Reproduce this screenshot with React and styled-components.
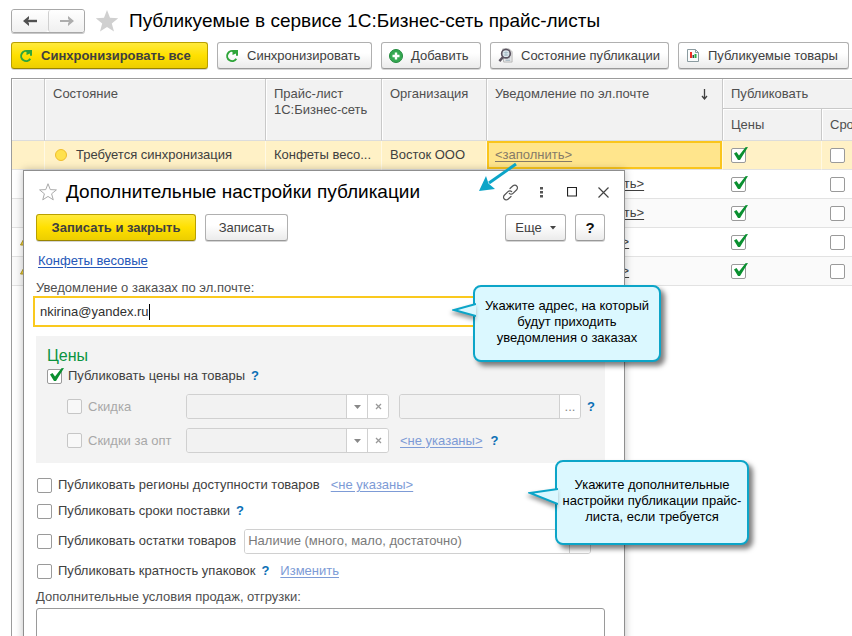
import React, { useState } from "react";
import styled, { createGlobalStyle, css } from "styled-components";

const GlobalStyle = createGlobalStyle`
  * {
    box-sizing: border-box;
  }
  body {
    margin: 0;
    background: #fff;
    color: #404040;
    font-family: "Liberation Sans", Arial, sans-serif;
    font-size: 13px;
    line-height: 16px;
  }
  button, input, select, textarea {
    font: inherit;
    color: inherit;
  }
`;

const priceLists = [
  { id: 1, state: "Требуется синхронизация", list: "Конфеты весо...", org: "Восток ООО", active: true, indent: 8 },
  { id: 2, indent: 80 },
  { id: 3, indent: 80 },
  { id: 4, warning: true, indent: 65 },
  { id: 5, warning: true, indent: 65 },
];

const STAR = "M12 1l3 7.800 8.200.4-6.400 5.200 2.200 8L12 17.900 5 22.400l2.200-8L.8 9.200 9 8.800z";

const RefreshIcon = () => (
  <svg width="14" height="14" viewBox="0 0 14 14" fill="none" stroke="#2fa53a" strokeWidth="2">
    <path d="M11.300 9.800A5 5 0 1 1 9.500 2.600" />
    <path d="M7.500 1H13v5.800h-2V4.500L7.500 6z" fill="#2fa53a" stroke="none" />
  </svg>
);

const AddIcon = () => (
  <svg width="14" height="14" viewBox="0 0 14 14">
    <circle cx="7" cy="7" r="6.500" fill="#35a852" stroke="#238a3e" />
    <path d="M7 3.500v7M3.500 7h7" stroke="#fff" strokeWidth="2.400" />
  </svg>
);

const SearchIcon = () => (
  <svg width="15" height="15" viewBox="0 0 16 16" fill="none">
    <path d="M5 1h7l3 3v11H6z" fill="#e9e9e9" stroke="#b3b3b3" />
    <path d="M8 10.500h5M8 13h5" stroke="#8fa8b8" />
    <circle cx="8.500" cy="6" r="4.600" fill="#dfe9ee" stroke="#5b5460" strokeWidth="1.800" />
    <path d="M6 5h5M6 7.500h5M8.500 3.500v5" stroke="#a5bcc8" />
    <path d="M5.500 9.500L1.500 14" stroke="#5b5460" strokeWidth="2.600" />
  </svg>
);

const ReportIcon = () => (
  <svg width="14" height="15" viewBox="0 0 14 15">
    <path d="M1.500 1.500h8l3 3v9h-11z" fill="#fafcfc" stroke="#8b9ba0" />
    <path d="M9.500 1.500v3h3" fill="none" stroke="#8b9ba0" />
    <path d="M4 4h2v6H4z" fill="#f02b22" />
    <path d="M6.500 7h1.500v3H6.500z" fill="#3c4a48" />
    <path d="M8.500 6h2v4H8.500z" fill="#27ad45" />
  </svg>
);

const CheckMark = () => (
  <Tick width="18" height="17" viewBox="0 0 18 17">
    <path d="M3 7.500l2.500-1.500 2.500 3.500L14.500 1.200l2.500-.2L9 14H7z" fill="#0a9030" />
  </Tick>
);

function Check({ checked, disabled, label, id }) {
  const [on, setOn] = useState(!!checked);
  return (
    <CheckWrap>
      <CheckInput
        id={id}
        type="checkbox"
        checked={on}
        disabled={disabled}
        aria-label={label}
        onChange={() => setOn(!on)}
      />
      {on && <CheckMark />}
    </CheckWrap>
  );
}

function Option({ id, text, checked, disabled, children, ...rest }) {
  return (
    <OptionRow {...rest}>
      <Check id={id} checked={checked} disabled={disabled} />
      <OptionLabel htmlFor={id} $disabled={disabled}>
        {text}
      </OptionLabel>
      {children}
    </OptionRow>
  );
}

function Combo({ label }) {
  return (
    <Field $width={203}>
      <FieldInput disabled aria-label={label} />
      <FieldButton disabled aria-label="Выбрать">
        <svg width="7" height="4" viewBox="0 0 7 4"><path d="M0 0h7L3.500 4z" fill="#888" /></svg>
      </FieldButton>
      <FieldButton disabled aria-label="Очистить">
        <svg width="7" height="7" viewBox="0 0 7 7"><path d="M1 1l5 5M6 1L1 6" stroke="#999" strokeWidth="1.300" /></svg>
      </FieldButton>
    </Field>
  );
}

function PriceTable() {
  return (
    <TableArea>
      <Table>
        <colgroup>
          <col style={{ width: 33 }} />
          <col style={{ width: 221 }} />
          <col style={{ width: 116 }} />
          <col style={{ width: 105 }} />
          <col style={{ width: 236 }} />
          <col style={{ width: 99 }} />
          <col style={{ width: 99 }} />
        </colgroup>
        <thead>
          <tr>
            <Th rowSpan="2" />
            <Th rowSpan="2">Состояние</Th>
            <Th rowSpan="2">Прайс-лист 1С:Бизнес-сеть</Th>
            <Th rowSpan="2">Организация</Th>
            <Th rowSpan="2">
              <Sorted>
                Уведомление по эл.почте
                <svg width="7" height="11" viewBox="0 0 7 11" fill="none" stroke="#404040">
                  <path d="M3.500 0v10M1 7l2.500 3L6 7" strokeWidth="1.300" />
                </svg>
              </Sorted>
            </Th>
            <Th colSpan="2" $group>Публиковать</Th>
          </tr>
          <tr>
            <Th $sub>Цены</Th>
            <Th $sub>Сро</Th>
          </tr>
        </thead>
        <tbody>
          {priceLists.map((row) => (
            <Row key={row.id} $active={row.active}>
              <Td>
                {row.warning && (
                  <svg width="12" height="12" viewBox="0 0 12 12"><path d="M6 1l5.500 10H.5z" fill="#f1d33c" stroke="#b49a1e" /></svg>
                )}
              </Td>
              <Td>{row.state && <State><Dot />{row.state}</State>}</Td>
              <Td>{row.list}</Td>
              <Td>{row.org}</Td>
              <Td $selected={row.active} $indent={row.indent}>
                <FillLink href="#mail" $muted={row.active}>&lt;заполнить&gt;</FillLink>
              </Td>
              <Td><Check checked label="Цены" /></Td>
              <Td><Check label="Сроки" /></Td>
            </Row>
          ))}
        </tbody>
      </Table>
    </TableArea>
  );
}

function SettingsDialog() {
  const [email, setEmail] = useState("nkirina@yandex.ru");

  return (
    <Dialog role="dialog" aria-label="Дополнительные настройки публикации">
      <TitleBar>
        <svg width="18" height="18" viewBox="0 0 24 24"><path d={STAR} fill="#fff" stroke="#a8a8a8" strokeWidth="1.300" /></svg>
        <DialogTitle>Дополнительные настройки публикации</DialogTitle>
        <WindowButtons>
          <IconButton aria-label="Ссылка">
            <svg width="17" height="17" viewBox="0 0 17 17" fill="none" stroke="#555" strokeWidth="1.200" strokeLinecap="round">
              <path d="M8 4.500L11 1.800a2.600 2.600 0 0 1 3.700.2 2.600 2.600 0 0 1 0 3.700L11 9.400a2.600 2.600 0 0 1-3.700 0" />
              <path d="M9 12.500L6 15.200a2.600 2.600 0 0 1-3.700-.2 2.600 2.600 0 0 1 0-3.700L6 7.600a2.600 2.600 0 0 1 3.700 0" />
            </svg>
          </IconButton>
          <IconButton aria-label="Меню">
            <svg width="3" height="11" viewBox="0 0 3 11" fill="#555"><path d="M0 0h3v2.500H0zM0 4h3v2.500H0zM0 8h3v2.500H0z" /></svg>
          </IconButton>
          <IconButton aria-label="Развернуть">
            <svg width="10" height="10" viewBox="0 0 10 10"><path d="M.5 .5h9v8.500h-9z" fill="none" stroke="#222" strokeWidth="1.200" /></svg>
          </IconButton>
          <IconButton aria-label="Закрыть">
            <svg width="11" height="11" viewBox="0 0 11 11"><path d="M.5.5l10 10M10.500.5l-10 10" stroke="#444" strokeWidth="1.200" /></svg>
          </IconButton>
        </WindowButtons>
      </TitleBar>

      <Commands>
        <Button $primary $width={160}>Записать и закрыть</Button>
        <Button $width={83}>Записать</Button>
        <Spacer />
        <Button $width={61}>
          Еще
          <svg width="6" height="4" viewBox="0 0 6 4"><path d="M0 0h6L3 3.500z" fill="#444" /></svg>
        </Button>
        <Button $width={30} $strong>?</Button>
      </Commands>

      <ProductLink href="#product">Конфеты весовые</ProductLink>

      <Caption htmlFor="email">Уведомление о заказах по эл.почте:</Caption>
      <EmailField>
        <EmailInput id="email" value={email} onChange={(e) => setEmail(e.target.value)} />
        <Caret />
      </EmailField>

      <Group>
        <GroupTitle>Цены</GroupTitle>
        <Option id="prices" text="Публиковать цены на товары" checked>
          <Help href="#help">?</Help>
        </Option>
        <Nested>
          <Option id="discount" text="Скидка" disabled>
            <Combo label="Вид скидки" />
            <Field $width={182}>
              <FieldInput disabled aria-label="Скидка" />
              <FieldButton disabled>...</FieldButton>
            </Field>
            <Help href="#help">?</Help>
          </Option>
          <Option id="wholesale" text="Скидки за опт" disabled>
            <Combo label="Вид скидки за опт" />
            <SoftLink href="#wholesale">&lt;не указаны&gt;</SoftLink>
            <Help href="#help">?</Help>
          </Option>
        </Nested>
      </Group>

      <Options>
        <Option id="regions" text="Публиковать регионы доступности товаров">
          <SoftLink href="#regions">&lt;не указаны&gt;</SoftLink>
        </Option>
        <Option id="terms" text="Публиковать сроки поставки">
          <Help href="#help">?</Help>
        </Option>
        <StockOption id="stock" text="Публиковать остатки товаров">
          <Field $grow>
            <StockSelect aria-label="Остатки">
              <option>Наличие (много, мало, достаточно)</option>
            </StockSelect>
            <FieldButton aria-label="Выбрать" />
          </Field>
          <Help href="#help">?</Help>
        </StockOption>
        <Option id="packs" text="Публиковать кратность упаковок">
          <Help href="#help">?</Help>
          <SoftLink href="#packs">Изменить</SoftLink>
        </Option>
      </Options>

      <Caption htmlFor="extra">Дополнительные условия продаж, отгрузки:</Caption>
      <TextArea id="extra" rows="3" />

      <Arrow width="42" height="34" viewBox="0 0 42 34">
        <path d="M39 3L12 22" stroke="#0ca5c8" strokeWidth="3" />
        <path d="M2 30l7-15 2.500 7.500L18 28z" fill="#0ca5c8" />
      </Arrow>
      <Callout $top={114} $right={-37} $width={188} $height={77}>
        <Tail width="24" height="18" viewBox="0 0 24 18"><path d="M24 3L2 9l22 6" /></Tail>
        Укажите адрес, на который будут приходить уведомления о заказах
      </Callout>
      <Callout $top={289} $right={-125} $width={194} $height={85}>
        <Tail $low width="30" height="18" viewBox="0 0 30 18"><path d="M30 1L2 5l28 11" /></Tail>
        Укажите дополнительные настройки публикации прайс-листа, если требуется
      </Callout>
    </Dialog>
  );
}

function App() {
  return (
    <Page>
      <GlobalStyle />
      <Header>
        <Nav>
          <NavButton aria-label="Назад">
            <svg width="14" height="10" viewBox="0 0 14 10"><path d="M14 5H3" stroke="#505050" strokeWidth="2.400" /><path d="M0 5l6-5v2.500L4.500 5 6 7.500V10z" fill="#505050" /></svg>
          </NavButton>
          <NavButton aria-label="Вперед">
            <svg width="14" height="10" viewBox="0 0 14 10"><path d="M0 5h11" stroke="#adadad" strokeWidth="2" /><path d="M14 5L8 0v2.500L9.500 5 8 7.500V10z" fill="#adadad" /></svg>
          </NavButton>
        </Nav>
        <svg width="24" height="24" viewBox="0 0 24 24"><path d={STAR} fill="#d0d0d0" /></svg>
        <Title>Публикуемые в сервисе 1С:Бизнес-сеть прайс-листы</Title>
      </Header>
      <Toolbar>
        <Button $primary $icon $width={197}><RefreshIcon />Синхронизировать все</Button>
        <Button $icon $width={155}><RefreshIcon />Синхронизировать</Button>
        <Button $icon $width={100}><AddIcon />Добавить</Button>
        <Button $icon $width={179}><SearchIcon />Состояние публикации</Button>
        <Button $icon $width={171}><ReportIcon />Публикуемые товары</Button>
      </Toolbar>
      <PriceTable />
      <SettingsDialog />
    </Page>
  );
}

const Page = styled.main`
  position: relative;
  display: flex;
  flex-direction: column;
  min-height: 100vh;
  padding: 8px 0 0 11px;
  overflow: hidden;
`;

const Header = styled.header`
  display: flex;
  align-items: center;
  gap: 10px;
  height: 25px;
`;

const Nav = styled.nav`
  display: flex;
  border: 1px solid #a8a8a8;
  border-radius: 3px;
  box-shadow: 0 1px 0 #c8c8c8;
`;

const NavButton = styled.button`
  display: flex;
  align-items: center;
  justify-content: center;
  width: 36px;
  height: 22px;
  padding: 0;
  border: 0;
  border-radius: 3px;
  background: linear-gradient(#fff, #f0f0f0);
  & + & {
    border-left: 1px solid #d0d0d0;
  }
`;

const Title = styled.h1`
  margin: 0;
  color: #000;
  font-size: 19px;
  font-weight: 400;
  line-height: 24px;
  white-space: nowrap;
`;

const Toolbar = styled.div`
  display: flex;
  gap: 9px;
  padding: 9px 0;
`;

const Button = styled.button`
  display: flex;
  flex-shrink: 0;
  align-items: center;
  justify-content: center;
  gap: 8px;
  width: ${(props) => props.$width}px;
  height: 27px;
  padding: 0;
  border: 1px solid #b0b0b0;
  border-bottom-color: #999;
  border-radius: 3px;
  background: linear-gradient(#fff 40%, #ebebeb);
  box-shadow: 0 1px 0 #d5d5d5;
  color: #404040;
  white-space: nowrap;
  ${(props) =>
    props.$icon &&
    css`
      justify-content: flex-start;
      padding-left: 7px;
    `}
  ${(props) =>
    props.$primary &&
    css`
      border-color: #b9a000;
      border-bottom-color: #988400;
      background: linear-gradient(#ffea3d, #ffe000 50%, #ecce00);
      font-weight: 700;
    `}
  ${(props) =>
    props.$strong &&
    css`
      color: #111;
      font-size: 15px;
      font-weight: 700;
    `}
`;

const TableArea = styled.section`
  flex: 1;
  overflow: hidden;
  border-top: 1px solid #9c9c9c;
  border-left: 1px solid #9c9c9c;
`;

const Table = styled.table`
  width: 909px;
  table-layout: fixed;
  border-collapse: separate;
  border-spacing: 0;
`;

const Th = styled.th`
  height: ${(props) => (props.$sub ? 32 : 30)}px;
  padding: ${(props) => (props.$sub ? 8 : 7)}px 8px 0;
  border-right: 1px solid #c9c9c9;
  border-bottom: 1px solid ${(props) => (props.$group ? "#c9c9c9" : "#dcdcdc")};
  background: #f2f2f2;
  box-shadow: inset 1px 1px 0 #fff;
  color: #4f4f4f;
  font-weight: 400;
  text-align: left;
  vertical-align: top;
`;

const Sorted = styled.div`
  display: flex;
  align-items: center;
  justify-content: space-between;
  padding-right: 6px;
`;

const Row = styled.tr`
  background: ${(props) => (props.$active ? "#fff1c6" : "#fff")};
  &:nth-child(odd):not(:first-child) {
    background: #fafafa;
  }
`;

const Td = styled.td`
  height: 29px;
  padding: 0 8px;
  padding-left: ${(props) => props.$indent || 8}px;
  border-bottom: 1px solid #e2e2e2;
  white-space: nowrap;
  ${Row}:first-child & {
    border-right: 1px solid #fff9e4;
  }
  ${(props) =>
    props.$selected &&
    css`
      background: #ffe58c;
      box-shadow: inset 0 0 0 2px #fac51c;
    `}
`;

const State = styled.span`
  display: flex;
  align-items: center;
  gap: 9px;
  padding-left: 2px;
`;

const Dot = styled.span`
  width: 12px;
  height: 12px;
  border: 1px solid #efbd2c;
  border-radius: 50%;
  background: #ffe14d;
`;

const FillLink = styled.a`
  color: ${(props) => (props.$muted ? "#857a68" : "#404040")};
  text-underline-offset: 2px;
`;

const CheckWrap = styled.span`
  position: relative;
  display: flex;
  flex: none;
  width: 15px;
  height: 15px;
`;

const CheckInput = styled.input`
  appearance: none;
  width: 15px;
  height: 15px;
  margin: 0;
  border: 1px solid #9a9a9a;
  border-radius: 2px;
  background: #fff;
  &:disabled {
    border-color: #c6c6c6;
    background: #f8f8f8;
  }
`;

const Tick = styled.svg`
  position: absolute;
  top: -2px;
  left: 0;
  pointer-events: none;
`;

const Dialog = styled.section`
  position: absolute;
  top: 170px;
  left: 23px;
  right: 227px;
  display: flex;
  flex-direction: column;
  padding: 8px 19px 20px 12px;
  border: 1px solid #8f8f8f;
  background: #fff;
  box-shadow: 0 0 8px rgba(0, 0, 0, 0.25);
`;

const TitleBar = styled.div`
  display: flex;
  align-items: center;
  gap: 9px;
  height: 26px;
  padding-left: 3px;
`;

const DialogTitle = styled.h2`
  flex: 1;
  margin: 0;
  color: #000;
  font-size: 19px;
  font-weight: 400;
  line-height: 24px;
  white-space: nowrap;
`;

const WindowButtons = styled.div`
  display: flex;
  gap: 7px;
  margin-right: -10px;
`;

const IconButton = styled.button`
  display: flex;
  align-items: center;
  justify-content: center;
  width: 24px;
  height: 24px;
  padding: 0;
  border: 0;
  background: none;
`;

const Commands = styled.div`
  display: flex;
  gap: 9px;
  margin-top: 9px;
`;

const Spacer = styled.div`
  flex: 1;
`;

const ProductLink = styled.a`
  align-self: flex-start;
  margin: 12px 2px 11px;
  color: #2456b8;
  text-underline-offset: 2px;
`;

const Caption = styled.label`
  color: #4f4f4f;
`;

const EmailField = styled.div`
  position: relative;
  margin: 0 -3px;
`;

const EmailInput = styled.input`
  display: block;
  width: 100%;
  height: 31px;
  padding: 0 5px;
  border: 2px solid #fac91e;
  outline: 0;
  color: #303030;
`;

const Caret = styled.span`
  position: absolute;
  top: 8px;
  left: 116px;
  width: 1px;
  height: 16px;
  background: #000;
`;

const Group = styled.section`
  margin-top: 9px;
  padding: 10px 10px 10px 11px;
  background: #f3f3f3;
`;

const GroupTitle = styled.h3`
  margin: 0;
  color: #0a9440;
  font-size: 16px;
  font-weight: 400;
  line-height: 20px;
`;

const OptionRow = styled.div`
  display: flex;
  align-items: center;
  min-height: 20px;
`;

const StockOption = styled(Option)`
  height: 28px;
`;

const OptionLabel = styled.label`
  flex: none;
  width: ${(props) => (props.$disabled ? "98px" : "auto")};
  margin-left: 6px;
  color: ${(props) => (props.$disabled ? "#a8a8a8" : "#404040")};
  white-space: nowrap;
`;

const Nested = styled.div`
  display: flex;
  flex-direction: column;
  gap: 9px;
  padding: 8px 0 0 20px;
`;

const Options = styled.div`
  display: flex;
  flex-direction: column;
  gap: 6px;
  padding: 12px 0 8px 1px;
`;

const Field = styled.div`
  display: flex;
  width: ${(props) => (props.$grow ? "auto" : `${props.$width}px`)};
  flex: ${(props) => (props.$grow ? 1 : "none")};
  height: 25px;
  margin-left: ${(props) => (props.$grow ? 8 : 0)}px;
  border: 1px solid #d0d0d0;
  border-radius: 3px;
  overflow: hidden;
  & + & {
    margin-left: 10px;
  }
`;

const FieldInput = styled.input`
  flex: 1;
  min-width: 0;
  border: 0;
  background: #f2f2f2;
`;

const FieldButton = styled.button`
  display: flex;
  align-items: center;
  justify-content: center;
  width: 21px;
  padding: 0;
  border: 0;
  border-left: 1px solid #d0d0d0;
  background: #fff;
  color: #888;
`;

const StockSelect = styled.select`
  appearance: none;
  flex: 1;
  min-width: 0;
  padding: 0 3px;
  border: 0;
  background: #fff;
  color: #7a7a7a;
`;

const Help = styled.a`
  margin-left: 6px;
  color: #0b6fb5;
  font-weight: 700;
  text-decoration: none;
`;

const SoftLink = styled.a`
  margin: 0 2px 0 11px;
  color: #7d9bd6;
  text-underline-offset: 2px;
`;

const TextArea = styled.textarea`
  display: block;
  width: 100%;
  margin-top: 3px;
  border: 1px solid #9a9a9a;
  border-radius: 3px;
  resize: none;
`;

const Arrow = styled.svg`
  position: absolute;
  top: -10px;
  right: 105px;
`;

const Callout = styled.aside`
  position: absolute;
  top: ${(props) => props.$top}px;
  right: ${(props) => props.$right}px;
  width: ${(props) => props.$width}px;
  min-height: ${(props) => props.$height}px;
  display: flex;
  align-items: center;
  justify-content: center;
  padding: 0 5px 3px;
  border: 2px solid #0ca5c8;
  border-radius: 8px;
  background: #dbf8ff;
  box-shadow: 4px 4px 5px rgba(0, 0, 0, 0.5);
  color: #000;
  text-align: center;
`;

const Tail = styled.svg`
  position: absolute;
  right: 100%;
  top: ${(props) => (props.$low ? 26 : 14)}px;
  margin-right: -1px;
  fill: #dbf8ff;
  stroke: #0ca5c8;
  stroke-width: 2;
  filter: drop-shadow(-1px 3px 2px rgba(0, 0, 0, 0.4));
`;

export default App;
